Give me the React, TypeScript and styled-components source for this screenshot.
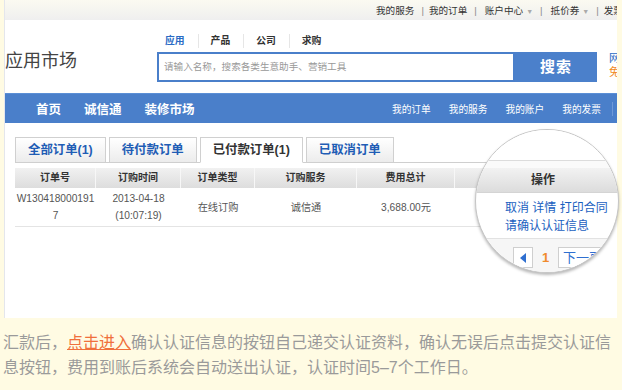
import styled, { createGlobalStyle } from 'styled-components';

const GlobalStyle = createGlobalStyle`
  html, body { margin: 0; padding: 0; background: #fffbe3; }
  body { font-family: "Liberation Sans", "Noto Sans CJK SC", sans-serif; }
`;

const Page = styled.div`
  position: relative;
  width: 622px;
  height: 390px;
  overflow: hidden;
  background: #fffbe3;
`;

const Panel = styled.div`
  margin: 0 5px 0 4px;
  height: 318px;
  background: #fff;
  border-left: 1px solid #e4e6ec;
  overflow: hidden;
`;

const TopBar = styled.div`
  display: flex;
  align-items: center;
  height: 20px;
  padding-left: 367px;
  font-size: 9.6px;
  color: #333;
  white-space: nowrap;
  background: linear-gradient(#fbfaf1, #efefef);
`;

const TopLink = styled.span<{ $pad?: number }>`
  flex-shrink: 0;
  padding: 0 2px 0 ${(p) => p.$pad ?? 0}px;
`;

const Caret = styled.span`
  margin-left: 3px;
  font-size: 7px;
  color: #aaa;
`;

const TopSep = styled.span`
  flex-shrink: 0;
  margin: 0 5px;
  color: #888;
`;

const Header = styled.div`
  display: flex;
  align-items: flex-start;
  height: 73px;
`;

const Logo = styled.div`
  flex-shrink: 0;
  width: 152px;
  padding-top: 29px;
  line-height: 24px;
  font-size: 18px;
  color: #444;
`;

const SearchArea = styled.div`
  flex-shrink: 0;
  display: flex;
  flex-direction: column;
`;

const SearchTabs = styled.div`
  display: flex;
  padding: 14px 0 0 8px;
  margin-bottom: 4px;
  line-height: 14px;
`;

const SearchTab = styled.span<{ $active?: boolean; $last?: boolean }>`
  padding: 0 ${(p) => (p.$last ? 0 : 13)}px 0 ${(p) => (p.$active ? 0 : 12)}px;
  border-right: ${(p) => (p.$last ? 'none' : '1px solid #e6e6e6')};
  font-size: 9.8px;
  font-weight: bold;
  color: ${(p) => (p.$active ? '#2a6bc4' : '#333')};
`;

const SearchRow = styled.div`
  display: flex;
  align-items: flex-start;
`;

const SearchInput = styled.div`
  box-sizing: border-box;
  flex-shrink: 0;
  width: 358px;
  height: 30px;
  border: 2px solid #4a7fca;
  padding-left: 5px;
  line-height: 26px;
  font-size: 9.6px;
  color: #999;
`;

const SearchButton = styled.div`
  flex-shrink: 0;
  width: 82px;
  height: 30px;
  background: #4b80cb;
  color: #fff;
  font-size: 15px;
  font-weight: bold;
  text-align: center;
  line-height: 30px;
  letter-spacing: 1px;
`;

const SideLinks = styled.div`
  flex-shrink: 0;
  margin: -1px 0 0 12px;
  font-size: 11px;
  line-height: 14px;
  white-space: nowrap;
`;

const SideLink = styled.div<{ $orange?: boolean }>`
  color: ${(p) => (p.$orange ? '#f08a1c' : '#2a6bc4')};
`;

const Nav = styled.div`
  display: flex;
  align-items: center;
  height: 29px;
  padding-left: 31px;
  background: #4a7fca;
  border-top: 1px solid #5b8fd6;
  color: #fff;
  white-space: nowrap;
`;

const NavMain = styled.span`
  margin-right: 23px;
  font-size: 12.5px;
  font-weight: bold;
`;

const NavRight = styled.div`
  display: flex;
  align-items: center;
  gap: 18px;
  margin-left: auto;
  margin-right: 4px;
  font-size: 9.7px;
`;

const NavDivider = styled.span`
  width: 1px;
  height: 14px;
  margin-left: -7px;
  background: #6f9ad8;
`;

const Content = styled.div`
  padding: 14px 11px 0 10px;
`;

const Tabs = styled.div`
  display: flex;
  align-items: flex-end;
  border-bottom: 1px solid #cfcfcf;
`;

const Tab = styled.div<{ $active?: boolean }>`
  box-sizing: border-box;
  height: 26px;
  margin: 0 3px -1px 0;
  padding: 0 12px;
  border: 1px solid #d0d0d0;
  border-bottom-color: ${(p) => (p.$active ? '#fff' : '#cfcfcf')};
  background: ${(p) => (p.$active ? '#fff' : 'linear-gradient(#ffffff, #ececec)')};
  color: ${(p) => (p.$active ? '#333' : '#1f5db5')};
  font-size: 12.4px;
  font-weight: bold;
  line-height: 24px;
  white-space: nowrap;
`;

const Table = styled.div`
  display: grid;
  grid-template-columns: 81px 85px 74px 102px 98px 1fr;
  margin-top: 5px;
`;

const HeadCell = styled.div`
  height: 20px;
  line-height: 20px;
  border-right: 1px solid #f7f7f7;
  background: linear-gradient(#f1f1f1, #dddddd);
  text-align: center;
  font-size: 10px;
  font-weight: bold;
  color: #333;
`;

const Cell = styled.div`
  display: flex;
  align-items: center;
  justify-content: center;
  height: 38px;
  border-bottom: 1px solid #e4e4e4;
  text-align: center;
  font-size: 10.2px;
  line-height: 17px;
  color: #555;
`;

const Note = styled.div`
  padding: 12px 0 0 3px;
  font-size: 16px;
  line-height: 25px;
  color: #9a9a9a;
  white-space: nowrap;
`;

const NoteLink = styled.span`
  color: #f0703c;
  text-decoration: underline;
`;

/* magnifier lens over the operations column */
const Lens = styled.div`
  position: absolute;
  left: 475px;
  top: 129px;
  box-sizing: border-box;
  width: 144px;
  height: 144px;
  border-radius: 50%;
  border: 1px solid #c6c6c6;
  box-shadow: 0 2px 3px rgba(0, 0, 0, 0.28);
  overflow: hidden;
  background: #fff;
  display: flex;
  flex-direction: column;
`;

const LensTop = styled.div`
  height: 30px;
  border-bottom: 1px solid #dcdcdc;
  background: #fff;
`;

const LensGap = styled.div`
  height: 7px;
  background: #fafafa;
`;

const LensHead = styled.div`
  height: 24px;
  line-height: 24px;
  padding-right: 8px;
  background: linear-gradient(#f2f2f2, #dcdcdc);
  border-bottom: 1px solid #d4d4d4;
  text-align: center;
  font-size: 12px;
  font-weight: bold;
  color: #333;
`;

const LensLinks = styled.div`
  padding: 6px 0 3px 29px;
  border-bottom: 1px solid #e2e2e2;
  font-size: 12px;
  line-height: 18px;
  color: #1a5fbf;
  white-space: nowrap;
`;

const Pager = styled.div`
  flex: 1;
  display: flex;
  align-items: flex-start;
  padding: 8px 0 0 37px;
  background: #f6f6f6;
`;

const PrevBox = styled.div`
  box-sizing: border-box;
  display: flex;
  align-items: center;
  justify-content: center;
  width: 20px;
  height: 21px;
  border: 1px solid #cfcfcf;
  background: #fff;
`;

const PageNum = styled.span`
  width: 25px;
  text-align: center;
  line-height: 21px;
  font-size: 13px;
  font-weight: bold;
  color: #f08a2c;
`;

const NextBox = styled.div`
  box-sizing: border-box;
  height: 21px;
  padding: 0 4px;
  border: 1px solid #cfcfcf;
  background: #fff;
  line-height: 19px;
  font-size: 13px;
  color: #2f6fd0;
  white-space: nowrap;
`;

const App = () => {
  return (
    <Page>
      <GlobalStyle />
      <Panel>
        <TopBar>
          <TopLink $pad={4}>我的服务</TopLink>
          <TopSep>|</TopSep>
          <TopLink>我的订单</TopLink>
          <TopSep>|</TopSep>
          <TopLink $pad={3}>
            账户中心<Caret>▼</Caret>
          </TopLink>
          <TopSep>|</TopSep>
          <TopLink $pad={3}>
            抵价券<Caret>▼</Caret>
          </TopLink>
          <TopSep>|</TopSep>
          <TopLink>发票</TopLink>
        </TopBar>
        <Header>
          <Logo>应用市场</Logo>
          <SearchArea>
            <SearchTabs>
              <SearchTab $active>应用</SearchTab>
              <SearchTab>产品</SearchTab>
              <SearchTab>公司</SearchTab>
              <SearchTab $last>求购</SearchTab>
            </SearchTabs>
            <SearchRow>
              <SearchInput>请输入名称，搜索各类生意助手、营销工具</SearchInput>
              <SearchButton>搜索</SearchButton>
              <SideLinks>
                <SideLink>网商</SideLink>
                <SideLink $orange>免费</SideLink>
              </SideLinks>
            </SearchRow>
          </SearchArea>
        </Header>
        <Nav>
          <NavMain>首页</NavMain>
          <NavMain>诚信通</NavMain>
          <NavMain>装修市场</NavMain>
          <NavRight>
            <span>我的订单</span>
            <span>我的服务</span>
            <span>我的账户</span>
            <span>我的发票</span>
            <NavDivider />
          </NavRight>
        </Nav>
        <Content>
          <Tabs>
            <Tab>全部订单(1)</Tab>
            <Tab>待付款订单</Tab>
            <Tab $active>已付款订单(1)</Tab>
            <Tab>已取消订单</Tab>
          </Tabs>
          <Table>
            <HeadCell>订单号</HeadCell>
            <HeadCell>订购时间</HeadCell>
            <HeadCell>订单类型</HeadCell>
            <HeadCell>订购服务</HeadCell>
            <HeadCell>费用总计</HeadCell>
            <HeadCell />
            <Cell>
              W130418000191
              <br />7
            </Cell>
            <Cell>
              2013-04-18
              <br />
              (10:07:19)
            </Cell>
            <Cell>在线订购</Cell>
            <Cell>诚信通</Cell>
            <Cell>3,688.00元</Cell>
            <Cell />
          </Table>
        </Content>
      </Panel>
      <Note>
        汇款后，<NoteLink>点击进入</NoteLink>确认认证信息的按钮自己递交认证资料，确认无误后点击提交认证信
        <br />
        息按钮，费用到账后系统会自动送出认证，认证时间5–7个工作日。
      </Note>
      <Lens>
        <LensTop />
        <LensGap />
        <LensHead>操作</LensHead>
        <LensLinks>
          取消 详情 打印合同
          <br />
          请确认认证信息
        </LensLinks>
        <Pager>
          <PrevBox>
            <svg width="6" height="10" viewBox="0 0 6 10">
              <path d="M6 0 L0 5 L6 10 Z" fill="#2f6fd0" />
            </svg>
          </PrevBox>
          <PageNum>1</PageNum>
          <NextBox>下一页</NextBox>
        </Pager>
      </Lens>
    </Page>
  );
};

export default App;
